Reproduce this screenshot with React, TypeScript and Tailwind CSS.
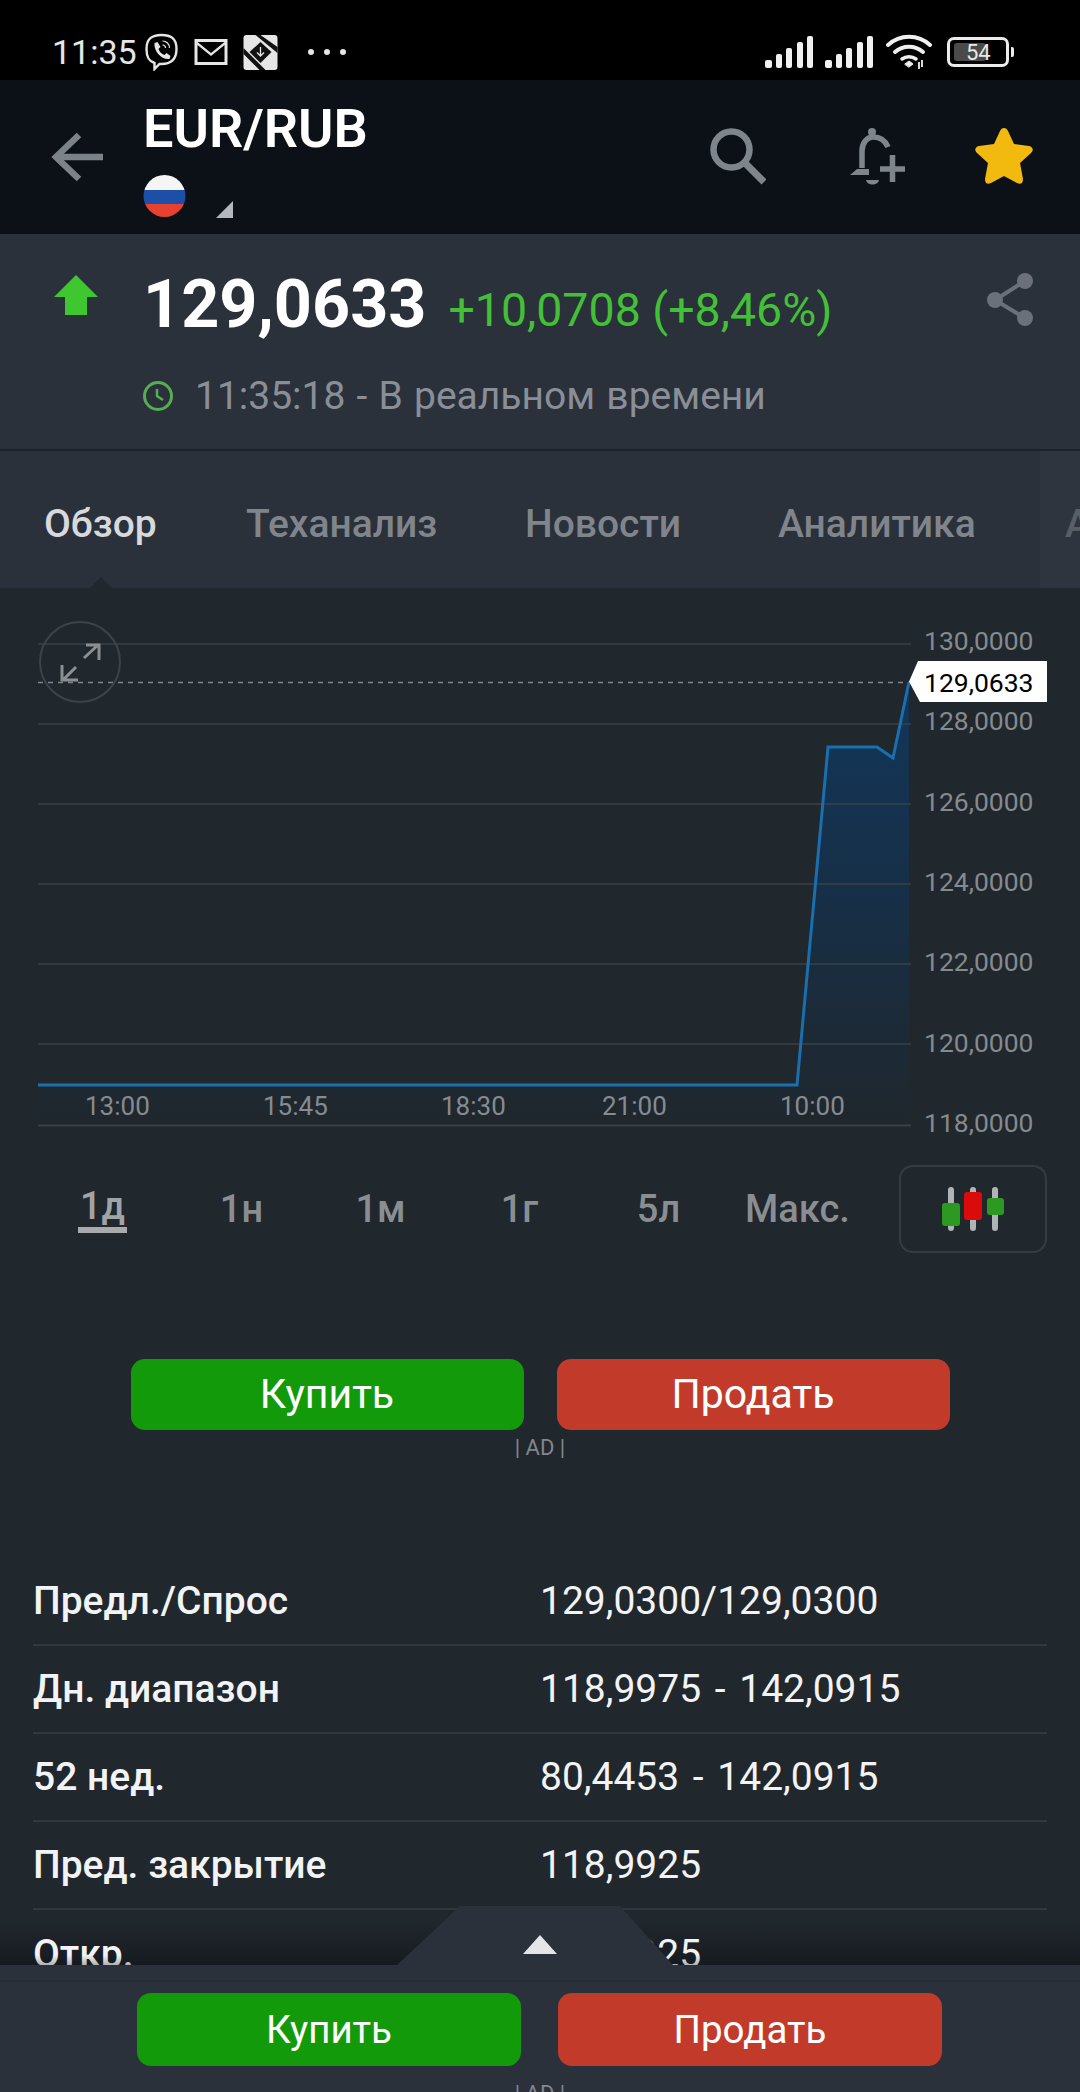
import React from "react";

const Buy = ({ cls, label, w }: { cls: string; label: string; w: string }) => (
  <button className={`${w} ${cls} flex items-center justify-center rounded-[14px] text-white`}>{label}</button>
);

const Signal = () => (
  <svg width="48" height="32" viewBox="0 0 48 32" fill="#f0f0f0">
    <rect x="0" y="24" width="7" height="8" rx="2" />
    <rect x="11" y="18" width="6" height="14" rx="2" />
    <rect x="21" y="12" width="6" height="20" rx="2" />
    <rect x="32" y="6" width="6" height="26" rx="2" />
    <rect x="42" y="0" width="6" height="32" rx="2" />
  </svg>
);

const ROWS = [
  ["Предл./Спрос", "129,0300/129,0300"],
  ["Дн. диапазон", "118,9975 - 142,0915"],
  ["52 нед.", "80,4453 - 142,0915"],
  ["Пред. закрытие", "118,9925"],
  ["Откр.", "118,9925"],
];

const YAXIS = ["130,0000", "128,0000", "126,0000", "124,0000", "122,0000", "120,0000", "118,0000"];
const XAXIS: [string, string][] = [
  ["13:00", "left-[85px]"],
  ["15:45", "left-[263px]"],
  ["18:30", "left-[441px]"],
  ["21:00", "left-[602px]"],
  ["10:00", "left-[780px]"],
];
const RANGES = ["1д", "1н", "1м", "1г", "5л", "Макс."];

export default function App() {
  return (
    <div className="relative h-[2092px] w-[1080px] overflow-hidden bg-[#20272d] font-['Roboto',sans-serif]">
      {/* status bar */}
      <div className="flex h-[80px] items-center justify-between bg-black pl-[52px] pr-[66px] pt-[24px] text-[#e6e6e6]">
        <div className="flex items-center">
          <span className="text-[34px] leading-none">11:35</span>
          <svg className="ml-[7px]" width="35" height="38" viewBox="0 0 34 38" fill="none" stroke="#e6e6e6" strokeWidth="2.4">
            <path d="M17 2c9 0 15 3 15 14s-6 15-15 15h-2l-5 5v-6C4 28 2 24 2 16 2 5 8 2 17 2z" />
            <path d="M10 10l3-1 3 5-2 2c1 3 3 5 6 6l2-2 4 3-1 3c-8 1-16-8-15-16z" fill="#e6e6e6" stroke="none" />
            <path d="M18 8c4 0 7 3 7 7M18 12c2 0 3 1 3 3" strokeWidth="1.2" />
          </svg>
          <svg className="ml-[15px]" width="34" height="26" viewBox="0 0 33 26" fill="#e6e6e6">
            <path fillRule="evenodd" d="M0 0h33v26H0zM3 3l13.500 11L30 3zM3 6v17h27V6L16.500 17z" />
          </svg>
          <svg className="ml-[15px]" width="35" height="35" viewBox="0 0 34 35">
            <rect width="34" height="35" rx="3" fill="#e6e6e6" />
            <path d="M11 0h6L34 12v6L12 0z" fill="#111" />
            <path d="M0 19l16 16h6L0 13z" fill="#111" />
            <path d="M17 7L6 17l11 11 11-11z" fill="#111" />
            <path d="M17 12v9M13.500 17.500l3.500 3.500 3.500-3.500" stroke="#e6e6e6" strokeWidth="1.3" fill="none" />
          </svg>
          <div className="ml-[30px] flex gap-[10px]">
            <span className="h-[6px] w-[6px] rounded-full bg-[#e6e6e6]" />
            <span className="h-[6px] w-[6px] rounded-full bg-[#e6e6e6]" />
            <span className="h-[6px] w-[6px] rounded-full bg-[#e6e6e6]" />
          </div>
        </div>
        <div className="flex items-center">
          <Signal />
          <div className="ml-[12px]"><Signal /></div>
          <svg className="ml-[13px]" width="46" height="36" viewBox="0 0 46 36" fill="none" stroke="#f0f0f0" strokeWidth="4" strokeLinecap="round">
            <path d="M2 11c12-11 30-11 42 0" />
            <path d="M9 18c8-7 20-7 28 0" />
            <path d="M16 25c4-3 10-3 14 0" strokeWidth="3.500" />
            <path d="M19 30l4-3 4 3-4 3z" fill="#f0f0f0" strokeWidth="1" />
            <path d="M33 28v7M36 26v7" strokeWidth="1.800" strokeLinecap="butt" />
          </svg>
          <div className="relative ml-[15px] flex h-[30px] w-[62px] items-center rounded-[7px] border-[3px] border-[#ececec] pl-[4px]">
            <div className="h-[18px] w-[32px] rounded-[3px] bg-[#4a4a4a]" />
            <span className="absolute left-[16px] top-[1px] text-[22px] leading-[23px] text-[#e8e8e8]">54</span>
          </div>
          <div className="ml-[2px] h-[10px] w-[3px] rounded-r-[2px] bg-[#ececec]" />
        </div>
      </div>

      {/* header */}
      <div className="flex h-[154px] items-start bg-[#0c1117]">
        <svg className="ml-[51px] mt-[52px]" width="52" height="52" viewBox="0 0 52 52" fill="none" stroke="#7b8289" strokeWidth="6.500">
          <path d="M52 25H5" />
          <path d="M28 3L5 25l23 22" />
        </svg>
        <div className="ml-[40px] flex flex-col">
          <span className="mt-[21px] text-[54px] font-semibold leading-[56px] text-white">EUR/RUB</span>
          <div className="mt-[17px] flex items-end">
            <svg width="43" height="44" viewBox="0 0 43 44">
              <defs><clipPath id="fl"><circle cx="21.500" cy="22" r="21" /></clipPath></defs>
              <g clipPath="url(#fl)">
                <rect width="43" height="16" fill="#f5f5f5" />
                <rect y="16" width="43" height="14" fill="#1d4fa8" />
                <rect y="30" width="43" height="14" fill="#e7412f" />
              </g>
            </svg>
            <svg className="ml-[30px]" width="17" height="17" viewBox="0 0 17 17"><path d="M17 0v17H0z" fill="#b4b7bc" /></svg>
          </div>
        </div>
        <div className="ml-auto mr-[47px] mt-[48px] flex items-start">
          <svg width="56" height="58" viewBox="0 0 56 58" fill="none" stroke="#7e858d" strokeWidth="6.500">
            <circle cx="21.500" cy="21.500" r="18" />
            <path d="M34 34l20 20" strokeWidth="7" />
          </svg>
          <svg className="ml-[83px]" width="57" height="58" viewBox="0 0 57 58" fill="none" stroke="#7e858d" strokeWidth="5.500">
            <circle cx="23" cy="4" r="4" fill="#7e858d" stroke="none" />
            <path d="M13 40V23c0-8 5-14 11-14 7 0 12 3 15 10" />
            <path d="M1 47l7-6h12v6z" fill="#7e858d" stroke="none" />
            <path d="M17 52h13c-1 6-12 6-13 0z" fill="#7e858d" stroke="none" />
            <path d="M31 41h25M43.500 27v27" />
          </svg>
          <svg className="ml-[69px]" width="58" height="56" viewBox="0 0 58 56" fill="#f2b90f">
            <path d="M29 0c2 0 3 1 4 3l6 13 15 2c4 1 5 4 2 7L45 35l3 16c0 4-2 6-6 4L29 48l-13 7c-4 2-6 0-6-4l3-16L2 25c-3-3-2-6 2-7l15-2 6-13c1-2 2-3 4-3z" />
          </svg>
        </div>
      </div>

      {/* quote */}
      <div className="relative h-[217px] border-b-[2px] border-[#1c2229] bg-[#2a313b]">
        <div className="flex items-start pt-[34px]">
          <svg className="ml-[54px] mt-[7px]" width="44" height="40" viewBox="0 0 44 40" fill="#3ec72f">
            <path d="M22 0l22 22H33v18H11V22H0z" />
          </svg>
          <span className="ml-[45px] pt-[13px] text-[66.500px] font-bold leading-[46px] text-white">129,0633</span>
          <span className="ml-[22px] mt-[15px] text-[46.500px] leading-[54px] text-[#43bf38]">+10,0708 (+8,46%)</span>
          <svg className="ml-auto mr-[45px] mt-[5px]" width="48" height="54" viewBox="0 0 48 54" fill="#6b7079">
            <circle cx="38" cy="8" r="8" /><circle cx="8" cy="27" r="8" /><circle cx="38" cy="45" r="8" />
            <path d="M38 8L8 27l30 18" fill="none" stroke="#6b7079" strokeWidth="4" />
          </svg>
        </div>
        <div className="mt-[37px] flex items-center pl-[142px]">
          <svg width="32" height="32" viewBox="0 0 32 32" fill="none" stroke="#57ad52" strokeWidth="3">
            <circle cx="16" cy="16" r="13.500" />
            <path d="M15 9v7l6 4" strokeWidth="2.500" />
          </svg>
          <span className="ml-[21px] text-[39px] leading-[44px] text-[#8a8e96] [word-spacing:1.500px]">11:35:18 - В реальном времени</span>
        </div>
      </div>

      {/* tabs */}
      <div className="relative flex h-[137px] items-center overflow-hidden bg-[#2a313b] pt-[10px] text-[39px] font-medium text-[#80858c]">
        <span className="absolute left-[44px] text-[#d7d9dc]">Обзор</span>
        <span className="absolute left-[246px]">Теханализ</span>
        <span className="absolute left-[525px]">Новости</span>
        <span className="absolute left-[778px]">Аналитика</span>
        <div className="absolute bottom-0 right-0 top-0 flex w-[40px] items-center overflow-hidden bg-[#2f353e] pl-[25px] pt-[10px] text-[#5a5f67]">А</div>
        <div className="absolute bottom-0 left-[90px] h-0 w-0 border-x-[11px] border-b-[11px] border-x-transparent border-b-[#20272d]" />
      </div>

      {/* chart */}
      <div className="relative h-[577px]">
        <svg className="absolute left-0 top-0" width="915" height="577" viewBox="0 588 915 577" fill="none">
          <defs>
            <linearGradient id="area" gradientUnits="userSpaceOnUse" x1="0" y1="682" x2="0" y2="1125">
              <stop offset="0" stopColor="#12365a" />
              <stop offset="0.5" stopColor="#172f46" />
              <stop offset="1" stopColor="#20272d" />
            </linearGradient>
          </defs>
          <path d="M38 1085H797L828 747H877L893 758L909 682V1125H38Z" fill="url(#area)" />
          {[644, 724, 804, 884, 964, 1044].map((y) => (
            <path key={y} d={`M38 ${y}H911`} stroke="#3a4148" strokeWidth="1.500" />
          ))}
          <path d="M38 1125.500H911" stroke="#3a4047" strokeWidth="2" />
          <path d="M38 682.500H909" stroke="#80868c" strokeWidth="1.500" strokeDasharray="5 5" />
          <path d="M38 1085H797L828 747H877L893 758L909 682" stroke="#1a6fae" strokeWidth="3" />
          <circle cx="80" cy="662" r="40" stroke="#3d4349" strokeWidth="2" />
          <path d="M84 658l14-13M86 645h13v15M76 667l-13 13M62 665v15h16" stroke="#8b8f92" strokeWidth="3" />
        </svg>
        {XAXIS.map(([t, l]) => (
          <span key={t} className={`absolute top-[502px] text-[26px] leading-[32px] text-[#868b90] ${l}`}>{t}</span>
        ))}
        <div className="absolute left-[924px] top-[35px] flex h-[518px] flex-col justify-between text-[26.500px] leading-[36px] text-[#858a8f]">
          {YAXIS.map((v) => <span key={v}>{v}</span>)}
        </div>
        <div className="absolute left-[909px] top-[73px] flex h-[41px] w-[138px] items-center bg-white pl-[15px] pt-[2px] text-[26.500px] text-black [clip-path:polygon(9px_0,100%_0,100%_100%,11px_100%,0_50%)]">129,0633</div>
      </div>

      {/* range selector */}
      <div className="flex h-[88px] items-center pl-[33px] text-[38px] font-medium text-[#8a8e93]">
        <div className="grid w-[834px] grid-cols-6 text-center">
          {RANGES.map((r, i) => (
            <div key={r} className="flex justify-center">
              <span className={i === 0 ? "border-b-[6px] border-[#a8abae] px-[2px] leading-[42px] text-[#a1a4a7]" : "leading-[48px]"}>{r}</span>
            </div>
          ))}
        </div>
        <div className="ml-[32px] flex h-[88px] w-[148px] items-center justify-center rounded-[14px] border-[2px] border-[#363c44]">
          <svg width="62" height="44" viewBox="0 0 62 44">
            <rect x="6" y="0" width="6" height="44" rx="3" fill="#b1b4b6" />
            <rect x="28" y="0" width="6" height="44" rx="3" fill="#b1b4b6" />
            <rect x="50" y="0" width="6" height="44" rx="3" fill="#b1b4b6" />
            <rect x="0" y="16" width="18" height="23" rx="3" fill="#2c9a21" />
            <rect x="22" y="5" width="18" height="28" rx="3" fill="#dc0b0b" />
            <rect x="45" y="11" width="17" height="17" rx="3" fill="#2c9a21" />
          </svg>
        </div>
      </div>

      {/* trade buttons */}
      <div className="mt-[106px] flex h-[71px] justify-center gap-[33px] text-[41px]">
        <Buy w="w-[393px]" cls="bg-[#129a0a]" label="Купить" />
        <Buy w="w-[393px]" cls="bg-[#c23b2a]" label="Продать" />
      </div>
      <div className="mt-[6px] text-center text-[22px] leading-[24px] text-[#81868b]">| AD |</div>

      {/* shadow cast on the page by the bottom drawer, behind the table text */}
      <div className="absolute bottom-[127px] left-0 right-0 h-[44px] bg-gradient-to-b from-transparent to-[#14181d]/80" />

      {/* table */}
      <div className="relative mx-[33px] mt-[98px] w-[1014px] text-[39px] leading-[44px] text-[#f2f3f4]">
        {ROWS.map(([k, v], i) => (
          <div key={k} className={`flex h-[88px] items-center ${i < 4 ? "border-b-[2px] border-[#31373e]" : ""}`}>
            <span className="w-[507px] font-medium">{k}</span>
            <span className="[word-spacing:4px]">{v}</span>
          </div>
        ))}
      </div>

      {/* bottom drawer */}
      <div className="absolute bottom-0 left-0 right-0 h-[127px] bg-[#2a313b]">
        <div className="absolute inset-x-0 bottom-full h-[10px] bg-gradient-to-b from-transparent to-[#14181d]/30" />
        <div className="absolute bottom-full left-[397px] h-[59px] w-[276px] bg-[#2a313b] [clip-path:polygon(63px_0,223px_0,100%_100%,0_100%)]" />
        <svg className="absolute left-[523px] top-[-30px]" width="34" height="19" viewBox="0 0 34 19"><path d="M17 0L34 19H0z" fill="#e4e5e6" /></svg>
        <div className="h-[17px] border-b-[2px] border-[#262c33]" />
        <div className="ml-[137px] mt-[11px] flex h-[73px] gap-[37px] text-[38.500px]">
          <Buy w="w-[384px]" cls="bg-[#129a0a]" label="Купить" />
          <Buy w="w-[384px]" cls="bg-[#c23b2a]" label="Продать" />
        </div>
        <div className="mt-[16px] text-center text-[22px] leading-[24px] text-[#81868b]">| AD |</div>
      </div>
    </div>
  );
}
